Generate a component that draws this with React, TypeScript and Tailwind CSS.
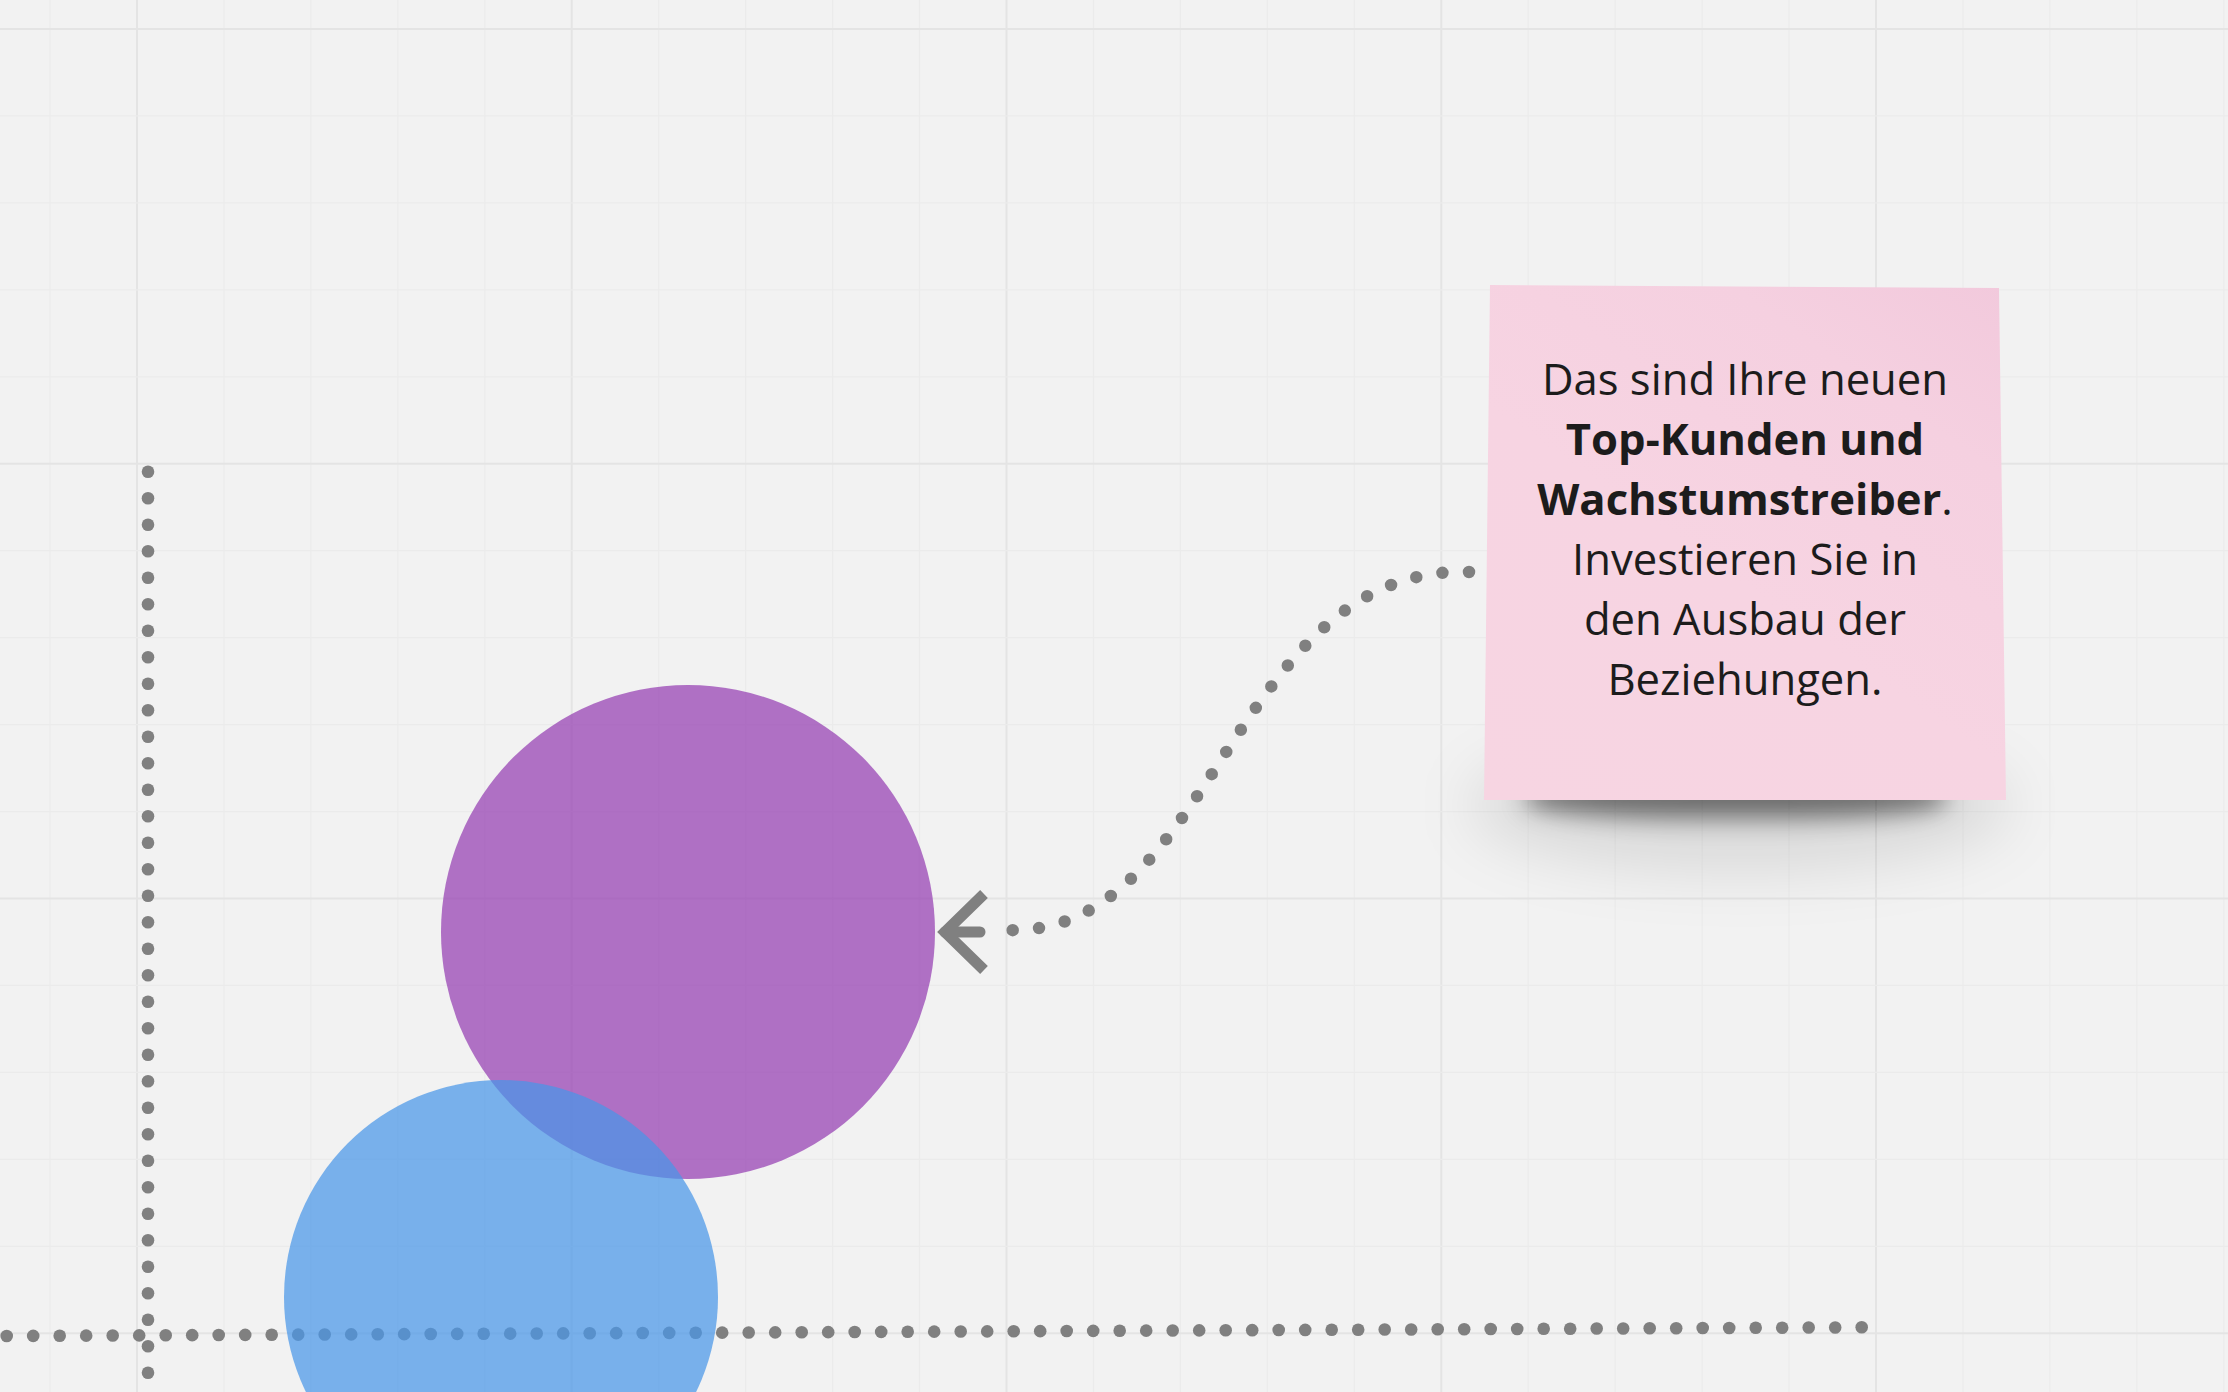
const STEP = 86.95;

const gridXs = Array.from({ length: 27 }, (_, i) => ({ v: 137 + (i - 1) * STEP, major: (i - 1) % 5 === 0 }));
const gridYs = Array.from({ length: 17 }, (_, i) => ({ v: 29 + i * STEP, major: i % 5 === 0 }));

// dotted axes
const axisX = Array.from({ length: 71 }, (_, i) => ({ x: 6.7 + i * 26.5, y: 1336 - i * 0.124 }));
const axisY = Array.from({ length: 36 }, (_, i) => 471.7 + i * 26.5);

function Canvas() {
  return (
    <svg className="absolute inset-0" width={2228} height={1392} viewBox="0 0 2228 1392">
      {gridXs.map((l, i) => (
        <line
          key={"gx" + i}
          x1={l.v}
          x2={l.v}
          y1={0}
          y2={1392}
          stroke={l.major ? "#e4e4e4" : "#ebebeb"}
          strokeWidth={l.major ? 2 : 1.2}
        />
      ))}
      {gridYs.map((l, i) => (
        <line
          key={"gy" + i}
          y1={l.v}
          y2={l.v}
          x1={0}
          x2={2228}
          stroke={l.major ? "#e4e4e4" : "#ebebeb"}
          strokeWidth={l.major ? 2 : 1.2}
        />
      ))}

      {axisX.map((d, i) => (
        <circle key={"ax" + i} cx={d.x} cy={d.y} r={6.3} fill="#808080" />
      ))}
      {axisY.map((y, i) => (
        <circle key={"ay" + i} cx={148} cy={y} r={6.3} fill="#808080" />
      ))}

      {/* bubbles */}
      <circle cx={688} cy={932} r={247} fill="rgba(148,61,178,0.72)" />
      <circle cx={501} cy={1297} r={217} fill="rgba(72,150,231,0.72)" />

      {/* connector */}
      <path
        d="M1469 572 C1230 565 1215 940 1005 930"
        fill="none"
        stroke="#808080"
        strokeWidth={12.5}
        strokeLinecap="round"
        strokeDasharray="0 26.5"
      />
      <path d="M984 894 L945 932 L984 970" fill="none" stroke="#808080" strokeWidth={11} strokeLinejoin="miter" />
      <path d="M945 932 L980 932" fill="none" stroke="#808080" strokeWidth={11} strokeLinecap="round" />
    </svg>
  );
}

function StickyNote() {
  return (
    <>
      <div className="absolute left-[1470px] top-[740px] h-[130px] w-[540px] rounded-[50%] bg-black/10 blur-[30px]" />
      <div className="absolute left-[1526px] top-[774px] h-[44px] w-[420px] rounded-[40%] bg-black/50 blur-[12px]" />
      <div className="absolute left-[1484px] top-[285px] h-[515px] w-[522px] [clip-path:polygon(6px_0,515px_3px,100%_100%,0_100%)] bg-[linear-gradient(215deg,#f2c9dc_0%,#f5d0e0_22%,#f7d4e2_55%,#f7d5e2_100%)]">
        <p className="pt-[63px] text-center font-['Open_Sans',sans-serif] text-[43.6px] leading-[60px] text-[#1c1c1c]">
          Das sind Ihre neuen
          <br />
          <span className="font-bold">Top-Kunden und</span>
          <br />
          <span className="font-bold">Wachstumstreiber</span>.
          <br />
          Investieren Sie in
          <br />
          den Ausbau der
          <br />
          Beziehungen.
        </p>
      </div>
    </>
  );
}

export default function App() {
  return (
    <div className="relative h-[1392px] w-[2228px] overflow-hidden bg-[#f2f2f2]">
      <Canvas />
      <StickyNote />
    </div>
  );
}
